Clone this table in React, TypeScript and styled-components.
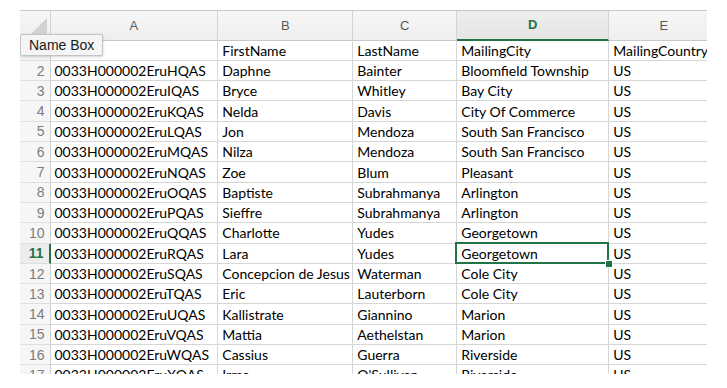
import styled, { createGlobalStyle, css } from 'styled-components';

const columns = ['A', 'B', 'C', 'D', 'E'];
const widths = [30.5, 167.8, 135, 104, 152, 110];

const rows: string[][] = [
  ['Id', 'FirstName', 'LastName', 'MailingCity', 'MailingCountry'],
  ['0033H000002EruHQAS', 'Daphne', 'Bainter', 'Bloomfield Township', 'US'],
  ['0033H000002EruIQAS', 'Bryce', 'Whitley', 'Bay City', 'US'],
  ['0033H000002EruKQAS', 'Nelda', 'Davis', 'City Of Commerce', 'US'],
  ['0033H000002EruLQAS', 'Jon', 'Mendoza', 'South San Francisco', 'US'],
  ['0033H000002EruMQAS', 'Nilza', 'Mendoza', 'South San Francisco', 'US'],
  ['0033H000002EruNQAS', 'Zoe', 'Blum', 'Pleasant', 'US'],
  ['0033H000002EruOQAS', 'Baptiste', 'Subrahmanya', 'Arlington', 'US'],
  ['0033H000002EruPQAS', 'Sieffre', 'Subrahmanya', 'Arlington', 'US'],
  ['0033H000002EruQQAS', 'Charlotte', 'Yudes', 'Georgetown', 'US'],
  ['0033H000002EruRQAS', 'Lara', 'Yudes', 'Georgetown', 'US'],
  ['0033H000002EruSQAS', 'Concepcion de Jesus', 'Waterman', 'Cole City', 'US'],
  ['0033H000002EruTQAS', 'Eric', 'Lauterborn', 'Cole City', 'US'],
  ['0033H000002EruUQAS', 'Kallistrate', 'Giannino', 'Marion', 'US'],
  ['0033H000002EruVQAS', 'Mattia', 'Aethelstan', 'Marion', 'US'],
  ['0033H000002EruWQAS', 'Cassius', 'Guerra', 'Riverside', 'US'],
  ['0033H000002EruXQAS', 'Irma', "O'Sullivan", 'Riverside', 'US'],
];

const selectedRow = 11;
const selectedCol = 3;

const App = () => {
  return (
    <>
      <GlobalStyle />
      <Page>
        <SheetFrame>
          <Sheet>
            <Corner />
            {columns.map((c, i) => (
              <ColumnHeader key={c} $active={i === selectedCol}>
                {c}
              </ColumnHeader>
            ))}
            {rows.map((row, r) => {
              const rowNum = r + 1;
              return [
                <RowHeader key={`h${rowNum}`} $active={rowNum === selectedRow}>
                  {rowNum}
                </RowHeader>,
                ...row.map((value, c) => (
                  <Cell
                    key={`${rowNum}-${c}`}
                    $selected={rowNum === selectedRow && c === selectedCol}
                  >
                    {value}
                  </Cell>
                )),
              ];
            })}
          </Sheet>
          <NameBoxTip>Name Box</NameBoxTip>
        </SheetFrame>
      </Page>
    </>
  );
};

export default App;

const GlobalStyle = createGlobalStyle`
  html, body {
    margin: 0;
    padding: 0;
    background: #ffffff;
  }
  * {
    box-sizing: border-box;
  }
`;

const Page = styled.div`
  width: 727px;
  height: 388px;
  padding: 10px 0 0 20px;
  background: #ffffff;
  overflow: hidden;
`;

const SheetFrame = styled.div`
  position: relative;
  width: 687px;
  height: 364px;
  overflow: hidden;
  border-top: 1px solid #c6c6c6;
`;

const Sheet = styled.div`
  display: grid;
  grid-template-columns: ${widths.map(w => `${w}px`).join(' ')};
  grid-template-rows: 29.6px;
  grid-auto-rows: 20.3px;
`;

const headerBase = css`
  background: linear-gradient(#f6f6f6, #eeeeee);
  border-right: 1px solid #d3d3d3;
  border-bottom: 1px solid #c9c9c9;
  font-family: 'Liberation Sans', Arial, sans-serif;
`;

const Corner = styled.div`
  ${headerBase};
  position: relative;

  &::after {
    content: '';
    position: absolute;
    right: 3px;
    bottom: 3px;
    width: 0;
    height: 0;
    border-left: 19px solid transparent;
    border-bottom: 19px solid #d2d2d2;
  }
`;

const ColumnHeader = styled.div<{ $active: boolean }>`
  ${headerBase};
  display: flex;
  align-items: center;
  justify-content: center;
  font-size: 13px;
  color: ${p => (p.$active ? '#217346' : '#5a5a5a')};
  font-weight: ${p => (p.$active ? 700 : 400)};
  ${p =>
    p.$active &&
    css`
      border-bottom: 2px solid #217346;
      background: linear-gradient(#eeeeee, #e4e4e4);
    `}
`;

const RowHeader = styled.div<{ $active: boolean }>`
  display: flex;
  align-items: center;
  justify-content: flex-end;
  padding-right: 5px;
  background: #f6f6f6;
  border-right: 1px solid #d0d0d0;
  border-bottom: 1px solid #dedede;
  font-family: 'Liberation Sans', Arial, sans-serif;
  font-size: 14px;
  color: ${p => (p.$active ? '#217346' : '#7c7c7c')};
  font-weight: ${p => (p.$active ? 700 : 400)};
  ${p =>
    p.$active &&
    css`
      border-right: 2px solid #217346;
      background: #ececec;
    `}
`;

const Cell = styled.div<{ $selected: boolean }>`
  position: relative;
  display: flex;
  align-items: center;
  padding-left: 4px;
  border-right: 1px solid #d6d6d6;
  border-bottom: 1px solid #d6d6d6;
  font-family: Lato, 'Open Sans', sans-serif;
  font-size: 14px;
  color: #000000;
  white-space: nowrap;
  overflow: ${p => (p.$selected ? 'visible' : 'hidden')};

  ${p =>
    p.$selected &&
    css`
      z-index: 2;

      &::after {
        content: '';
        position: absolute;
        inset: -2px -1px -1px -2px;
        border: 2px solid #217346;
        pointer-events: none;
      }

      &::before {
        content: '';
        position: absolute;
        right: -5px;
        bottom: -5px;
        width: 6px;
        height: 6px;
        background: #217346;
        border: 1px solid #ffffff;
        z-index: 3;
      }
    `}
`;

const NameBoxTip = styled.div`
  position: absolute;
  left: 0;
  top: 23px;
  width: 83px;
  height: 22px;
  display: flex;
  align-items: center;
  padding-left: 8px;
  background: #f5f5f5;
  border: 1px solid #c4c4c4;
  border-radius: 2px;
  box-shadow: 0 1px 3px rgba(0, 0, 0, 0.18);
  font-family: 'Liberation Sans', Arial, sans-serif;
  font-size: 14px;
  color: #1a1a1a;
  z-index: 5;
`;
